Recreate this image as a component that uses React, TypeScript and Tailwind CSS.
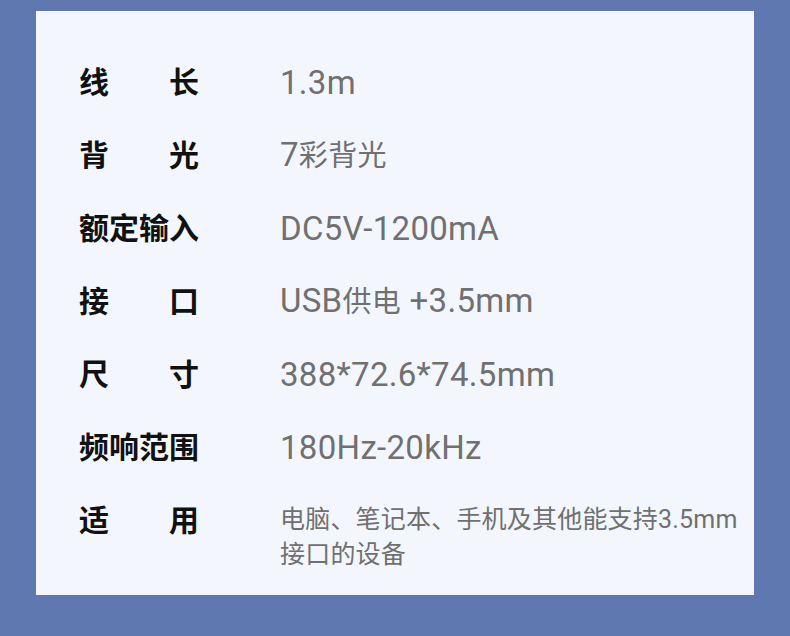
import React from "react";

const rows: { label: string[]; value: React.ReactNode }[] = [
  { label: ["线", "长"], value: <>1.3m</> },
  { label: ["背", "光"], value: <>7<span className="text-[29px]">彩背光</span></> },
  { label: ["额", "定", "输", "入"], value: <>DC5V-1200mA</> },
  { label: ["接", "口"], value: <>USB<span className="text-[29px]">供电</span> +3.5mm</> },
  { label: ["尺", "寸"], value: <>388*72.6*74.5mm</> },
  { label: ["频", "响", "范", "围"], value: <>180Hz-20kHz</> },
];

const cjk = { fontFamily: '"Noto Sans CJK SC", "Noto Sans", sans-serif' };
const val = { fontFamily: 'Roboto, "Noto Sans CJK SC", sans-serif' };

function Label({ chars, className = "" }: { chars: string[]; className?: string }) {
  return (
    <div
      className={`flex w-[120px] shrink-0 justify-between text-[30px] font-bold text-[#111111] ${className}`}
      style={cjk}
    >
      {chars.map((c, i) => (
        <span key={i}>{c}</span>
      ))}
    </div>
  );
}

export default function App() {
  return (
    <div className="h-[636px] w-full bg-[#5f78b0] pt-[11px]">
      <div className="ml-[36px] h-[584px] w-[718px] bg-[#f3f7fd] pl-[43px] pt-[35px]">
        {rows.map((r, i) => (
          <div key={i} className="flex h-[73px] items-center">
            <Label chars={r.label} className="pb-[6px] leading-[36px]" />
            <div
              className="ml-[81px] text-[33px] leading-[40px] tracking-[0.3px] text-[#707070]"
              style={val}
            >
              {r.value}
            </div>
          </div>
        ))}
        <div className="flex items-start pt-[17px]">
          <Label chars={["适", "用"]} className="-mt-[1px] leading-[36px]" />
          <div
            className="ml-[81px] text-[25px] leading-[33px] tracking-[0.2px] text-[#707070]"
            style={val}
          >
            <span style={cjk}>电脑、笔记本、手机及其他能支持</span>3.5mm
            <br />
            <span style={cjk}>接口的设备</span>
          </div>
        </div>
      </div>
    </div>
  );
}
